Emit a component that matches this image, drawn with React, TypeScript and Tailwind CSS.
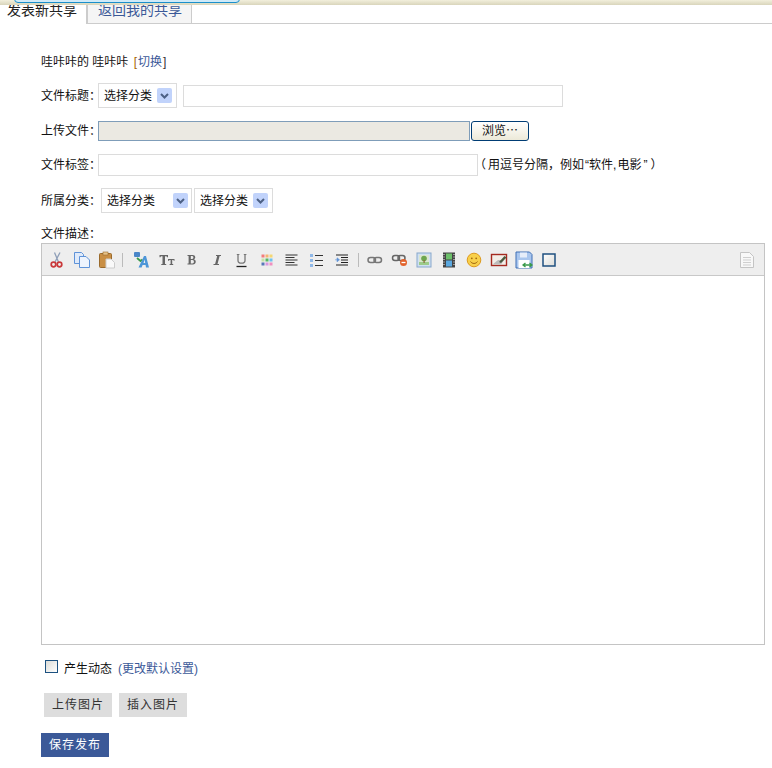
import type { ReactNode } from 'react';

const font = { fontFamily: '"Liberation Sans", "Noto Sans CJK SC", sans-serif' };

function SelectBox({ label, width, gap }: { label: string; width: string; gap?: string }) {
  return (
    <div className={`flex h-[25px] items-center border border-[#dcdcdc] bg-white pl-[5px] ${width}`}>
      <span className="text-[12px] text-[#111]">{label}</span>
      <span className={`flex h-[15px] w-[15px] items-center justify-center rounded-[2px] bg-[#c1d3fb] ${gap ?? 'ml-[5px]'}`}>
        <svg width="9" height="6" viewBox="0 0 9 6"><path d="M1 1l3.5 3.5L8 1" fill="none" stroke="#4d6185" strokeWidth="2" /></svg>
      </span>
    </div>
  );
}

function Row({ label, className, children }: { label: string; className?: string; children: ReactNode }) {
  return (
    <div className={`flex items-center ${className ?? ''}`}>
      <span className="text-[12px] leading-none text-[#111]">{label}</span>
      {children}
    </div>
  );
}

function Sep({ className }: { className: string }) {
  return <span className={`h-[14px] w-px bg-[#bbb] ${className}`} />;
}

function Tool({ w = 25, children }: { w?: number; children: ReactNode }) {
  return (
    <span className="flex h-[18px] items-center justify-center" style={{ width: w }}>
      <svg width="18" height="18" viewBox="0 0 18 18">{children}</svg>
    </span>
  );
}

function Toolbar() {
  return (
    <div className="flex h-[32px] items-center border-b border-[#c8c8c8] bg-[#eeeeee] pl-[2px] pr-[8px]">
      <Tool>
        <path d="M12 1.500L7 11M6.500 1.500l4 9.500" stroke="#8f9fb8" strokeWidth="1.300" fill="none" />
        <circle cx="5.500" cy="13.500" r="2.300" fill="none" stroke="#c9383a" strokeWidth="1.700" />
        <circle cx="11.500" cy="13.500" r="2.300" fill="none" stroke="#c9383a" strokeWidth="1.700" />
      </Tool>
      <Tool>
        <path d="M1.500 1.500h7l2 2v9h-9z" fill="#dfeafa" stroke="#5f93d8" />
        <path d="M6.500 5.500h6.500l3.500 3.500v7.500h-10z" fill="#eef4fd" stroke="#5f93d8" />
      </Tool>
      <Tool>
        <rect x="1.500" y="2.500" width="12" height="14" rx="1" fill="#c98f45" stroke="#9a6a2c" />
        <rect x="5" y="1" width="5" height="3" fill="#e7c389" stroke="#9a6a2c" strokeWidth=".6" />
        <path d="M8 8h5l3.500 3.500V17H8z" fill="#f9f9f9" stroke="#ccc" />
      </Tool>
      <Sep className="ml-[3px] mr-[4px]" />
      <Tool w={27}>
        <rect x="2" y="1" width="6" height="5" rx="1" fill="#4a86c8" />
        <path d="M5 7l3.500 3 2-1.500" stroke="#3c9a4a" strokeWidth="1.800" fill="none" />
        <path d="M6.500 16.500L12 5h2l3 11.500h-3l-.4-2.500h-3l-1 2.500zM11.500 12h1.700l-.4-3.500z" fill="#4d96d8" />
      </Tool>
      <Tool>
        <path d="M1.500 4h8.500v2.200H9L8.600 5.300H7V13h1.200v1H3.300v-1h1.200V5.300H2.900L2.500 6.200h-1z" fill="#666" />
        <path d="M10 8h6.500v1.800h-.8l-.3-.8h-1.200v4h1v1h-3.600v-1h1V9h-1.200l-.3.800H10z" fill="#666" />
      </Tool>
      <Tool>
        <path d="M4.500 4h5.200c3.100 0 3.300 3.600 1.200 4.300 2.700.6 2.500 5.200-1 5.200H4.500v-1h1.100V5H4.500zM7.800 5v3h1.400c1.600 0 1.600-3 0-3zM7.800 9v3.500h1.700c1.900 0 1.900-3.500 0-3.500z" fill="#666" />
      </Tool>
      <Tool>
        <path d="M8 4h5v1h-1.400L9.500 13H11v1H5.500v-1h1.600L9.200 5H8z" fill="#666" />
      </Tool>
      <Tool>
        <path d="M5 3.500v6c0 3.600 7 3.600 7 0v-6" fill="none" stroke="#777" strokeWidth="1.300" />
        <path d="M3.800 3.500h2.600M10.800 3.500h2.600" stroke="#777" />
        <path d="M3.500 15.500h10" stroke="#222" strokeWidth="1.300" />
      </Tool>
      <Tool>
        <rect x="3.500" y="3.500" width="3" height="3" fill="#f47c7c" />
        <rect x="7.500" y="3.500" width="3" height="3" fill="#f5b474" />
        <rect x="11.500" y="3.500" width="3" height="3" fill="#f4d774" />
        <rect x="3.500" y="7.500" width="3" height="3" fill="#c5e3a8" />
        <rect x="7.500" y="7.500" width="3" height="3" fill="#58b868" />
        <rect x="11.500" y="7.500" width="3" height="3" fill="#6cc0f0" />
        <rect x="3.500" y="11.500" width="3" height="3" fill="#5878b8" />
        <rect x="7.500" y="11.500" width="3" height="3" fill="#d898e0" />
        <rect x="11.500" y="11.500" width="3" height="3" fill="#f090c0" />
      </Tool>
      <Tool>
        <path d="M2.500 4h12M2.500 6.500h9M2.500 9h12M2.500 11.500h9M2.500 14h12" stroke="#333" strokeWidth="1.100" />
      </Tool>
      <Tool>
        <rect x="2" y="3" width="3" height="3" fill="#8fb8e8" />
        <rect x="2" y="8" width="3" height="3" fill="#8fb8e8" />
        <rect x="2" y="13" width="3" height="3" fill="#8fb8e8" />
        <path d="M7 4.500h8M7 9.500h8M7 14.500h8" stroke="#333" strokeWidth="1.100" />
      </Tool>
      <Tool>
        <path d="M3 4h12M8 6.500h7M8 9h7M8 11.500h7M3 14h12" stroke="#222" strokeWidth="1.100" />
        <path d="M2 8.800h3M4 6.800l2.500 2L4 10.800z" fill="#5f93d8" stroke="#5f93d8" strokeWidth=".6" />
      </Tool>
      <Sep className="ml-[4px] mr-[2px]" />
      <Tool w={27}>
        <rect x="2" y="6.500" width="7.500" height="5" rx="2.500" fill="none" stroke="#777" strokeWidth="1.500" />
        <rect x="8" y="6.500" width="7.500" height="5" rx="2.500" fill="none" stroke="#777" strokeWidth="1.500" />
      </Tool>
      <Tool w={23}>
        <rect x="1.500" y="4.500" width="7" height="5" rx="2.500" fill="none" stroke="#666" strokeWidth="1.500" />
        <rect x="7" y="4.500" width="7" height="5" rx="2.500" fill="none" stroke="#666" strokeWidth="1.500" />
        <circle cx="12.500" cy="11.500" r="3.500" fill="#e2622b" />
        <path d="M10.500 11.500h4" stroke="#fff" strokeWidth="1.300" />
      </Tool>
      <Tool>
        <rect x="2" y="2" width="14" height="14" fill="#cfe0f2" stroke="#88a8cc" />
        <rect x="4" y="4" width="10" height="10" fill="#dbe6d0" />
        <rect x="4" y="11" width="10" height="3" fill="#9ccb8a" />
        <circle cx="9" cy="7.500" r="2.800" fill="#6da64f" />
        <rect x="8.500" y="9" width="1.200" height="3" fill="#8a6a3c" />
      </Tool>
      <Tool>
        <rect x="3" y="1.500" width="12" height="15" fill="#444" />
        <rect x="6" y="2.500" width="6" height="6" fill="#6cc06a" />
        <rect x="6" y="9.500" width="6" height="6" fill="#5aa8e0" />
        <path d="M4 3v12.500M14 3v12.500" stroke="#ddd" strokeWidth="1.200" strokeDasharray="1 1.500" />
      </Tool>
      <Tool>
        <circle cx="9" cy="9" r="6.800" fill="#f8d04a" stroke="#dd9a20" />
        <circle cx="6.800" cy="7.300" r=".9" fill="#a36a10" />
        <circle cx="11.200" cy="7.300" r=".9" fill="#a36a10" />
        <path d="M5.500 10.500c1.500 2.600 5.500 2.600 7 0" fill="none" stroke="#a36a10" />
      </Tool>
      <Tool>
        <rect x="1.500" y="3.500" width="15" height="11" fill="#f3eee8" stroke="#a52a20" strokeWidth="1.400" />
        <path d="M2.500 13.500L8 9h6l-3 4.500z" fill="#bbb" />
        <path d="M9 11l5.500-6 2 1.500-5.500 5.500z" fill="#4b5b40" />
      </Tool>
      <Tool>
        <path d="M1 1h13.500l2.500 2.500V17H1z" fill="#a9c6ee" stroke="#3f6fb5" />
        <rect x="5" y="1.500" width="7" height="5" fill="#e6eefa" />
        <rect x="3.500" y="9" width="11" height="8" fill="#fff" />
        <path d="M8 14h9M10.500 12l-2.500 2 2.500 2M14.500 12l2.500 2-2.500 2" stroke="#3a9a4a" strokeWidth="1.300" fill="none" />
      </Tool>
      <Tool>
        <defs>
          <linearGradient id="boxFill" x1="0" y1="0" x2="1" y2="1">
            <stop offset="0" stopColor="#ffffff" />
            <stop offset="1" stopColor="#dcdcd7" />
          </linearGradient>
        </defs>
        <rect x="3" y="3" width="12" height="12" fill="url(#boxFill)" stroke="#1f5080" strokeWidth="1.500" />
      </Tool>
      <span className="ml-auto flex h-[18px] w-[18px] items-center justify-center">
        <svg width="16" height="18" viewBox="0 0 16 18">
          <path d="M1.500 1.500h9l4 4v11h-13z" fill="#f8f8f8" stroke="#c4c4c4" />
          <path d="M4 6.500h8M4 9h8M4 11.500h8M4 14h8" stroke="#cfcfcf" />
        </svg>
      </span>
    </div>
  );
}

export default function App() {
  return (
    <div className="h-[768px] w-[772px] overflow-hidden bg-white" style={font}>
      <div className="relative z-10 h-[5px] bg-gradient-to-b from-[#f2efdc] to-[#d9d5bb]">
        <div className="absolute left-[14px] top-[-6px] h-[9px] w-[226px] rounded-b-[4px] border border-[#1a8fcb] bg-[#cfeaf8]" />
      </div>
      <div className="flex h-[19px] items-end border-b border-[#cccccc]">
        <div className="relative top-px flex h-[19px] w-[88px] items-center border-r-2 border-[#cccccc] bg-white pl-[7px]">
          <span className="mt-[-9px] text-[14px] leading-none text-[#222]">发表新共享</span>
        </div>
        <div className="flex h-[18px] w-[104px] items-center border-r border-[#cccccc] bg-[#f5f5f5] pl-[10px]">
          <span className="mt-[-8px] text-[14px] leading-none text-[#3b5998]">返回我的共享</span>
        </div>
      </div>

      <div className="px-[41px]">
        <p className="mt-[32px] text-[12px] leading-none text-[#111]">
          哇咔咔的 哇咔咔 <span className="ml-[2px] text-[#a65f00]">[</span>
          <span className="ml-[1px] text-[#3b5998]">切换</span>
          <span className="ml-[1px] text-[#333]">]</span>
        </p>

        <Row label="文件标题：" className="mt-[15px] h-[25px]">
          <div className="-ml-[3px]">
            <SelectBox label="选择分类" width="w-[79px]" />
          </div>
          <div className="ml-[6px] h-[22px] w-[380px] border border-[#dcdcdc] bg-white" />
        </Row>

        <Row label="上传文件：" className="mt-[13px] h-[20px]">
          <div className="-ml-[3px] h-[20px] w-[372px] border border-[#7f9db9] bg-[#ebe9e2]" />
          <div className="ml-px flex h-[20px] w-[58px] items-center justify-center rounded-[3px] border border-[#003c74] bg-gradient-to-b from-white to-[#ece9d8] text-[12px] text-[#111]">
            浏览⋯
          </div>
        </Row>

        <Row label="文件标签：" className="mt-[13px] h-[22px]">
          <div className="-ml-[3px] h-[22px] w-[380px] border border-[#dcdcdc] bg-white" />
          <span className="-ml-[4px] text-[12px] leading-none text-[#111]">（</span>
          <span className="ml-[2px] text-[12px] leading-none text-[#111]">用逗号分隔，例如</span>
          <span className="ml-[1px] text-[12px] leading-none text-[#111]">“软件,</span>
          <span className="ml-[1px] text-[12px] leading-none text-[#111]">电影</span>
          <span className="ml-[2px] text-[12px] leading-none text-[#111]">”</span>
          <span className="ml-[3px] text-[12px] leading-none text-[#111]">）</span>
        </Row>

        <Row label="所属分类：" className="mt-[12px] h-[25px]">
          <div className="flex gap-[2px]">
            <SelectBox label="选择分类" width="w-[91px]" gap="ml-[18px]" />
            <SelectBox label="选择分类" width="w-[79px]" />
          </div>
        </Row>

        <p className="mt-[15px] text-[12px] leading-none text-[#111]">文件描述：</p>

        <div className="mt-[3px] h-[402px] w-[724px] border border-[#c4c4c4] bg-white">
          <Toolbar />
        </div>

        <div className="ml-[4px] mt-[15px] flex h-[14px] items-start">
          <span className="h-[13px] w-[13px] border border-[#1c5180] bg-gradient-to-br from-[#dcdcd7] to-white" />
          <span className="ml-[6px] mt-[3px] text-[12px] leading-none text-[#111]">产生动态</span>
          <span className="ml-[6px] mt-[3px] text-[12px] leading-none text-[#3b5998]">(更改默认设置)</span>
        </div>

        <div className="ml-[3px] mt-[19px] flex gap-[7px]">
          <button className="h-[24px] w-[68px] bg-[#dddddd] text-[12px] tracking-[1px] text-[#333]">上传图片</button>
          <button className="h-[24px] w-[68px] bg-[#dddddd] text-[12px] tracking-[1px] text-[#333]">插入图片</button>
        </div>

        <button className="mt-[16px] block h-[24px] w-[68px] bg-[#3b5998] text-[12px] tracking-[1px] text-white">保存发布</button>
      </div>
    </div>
  );
}
